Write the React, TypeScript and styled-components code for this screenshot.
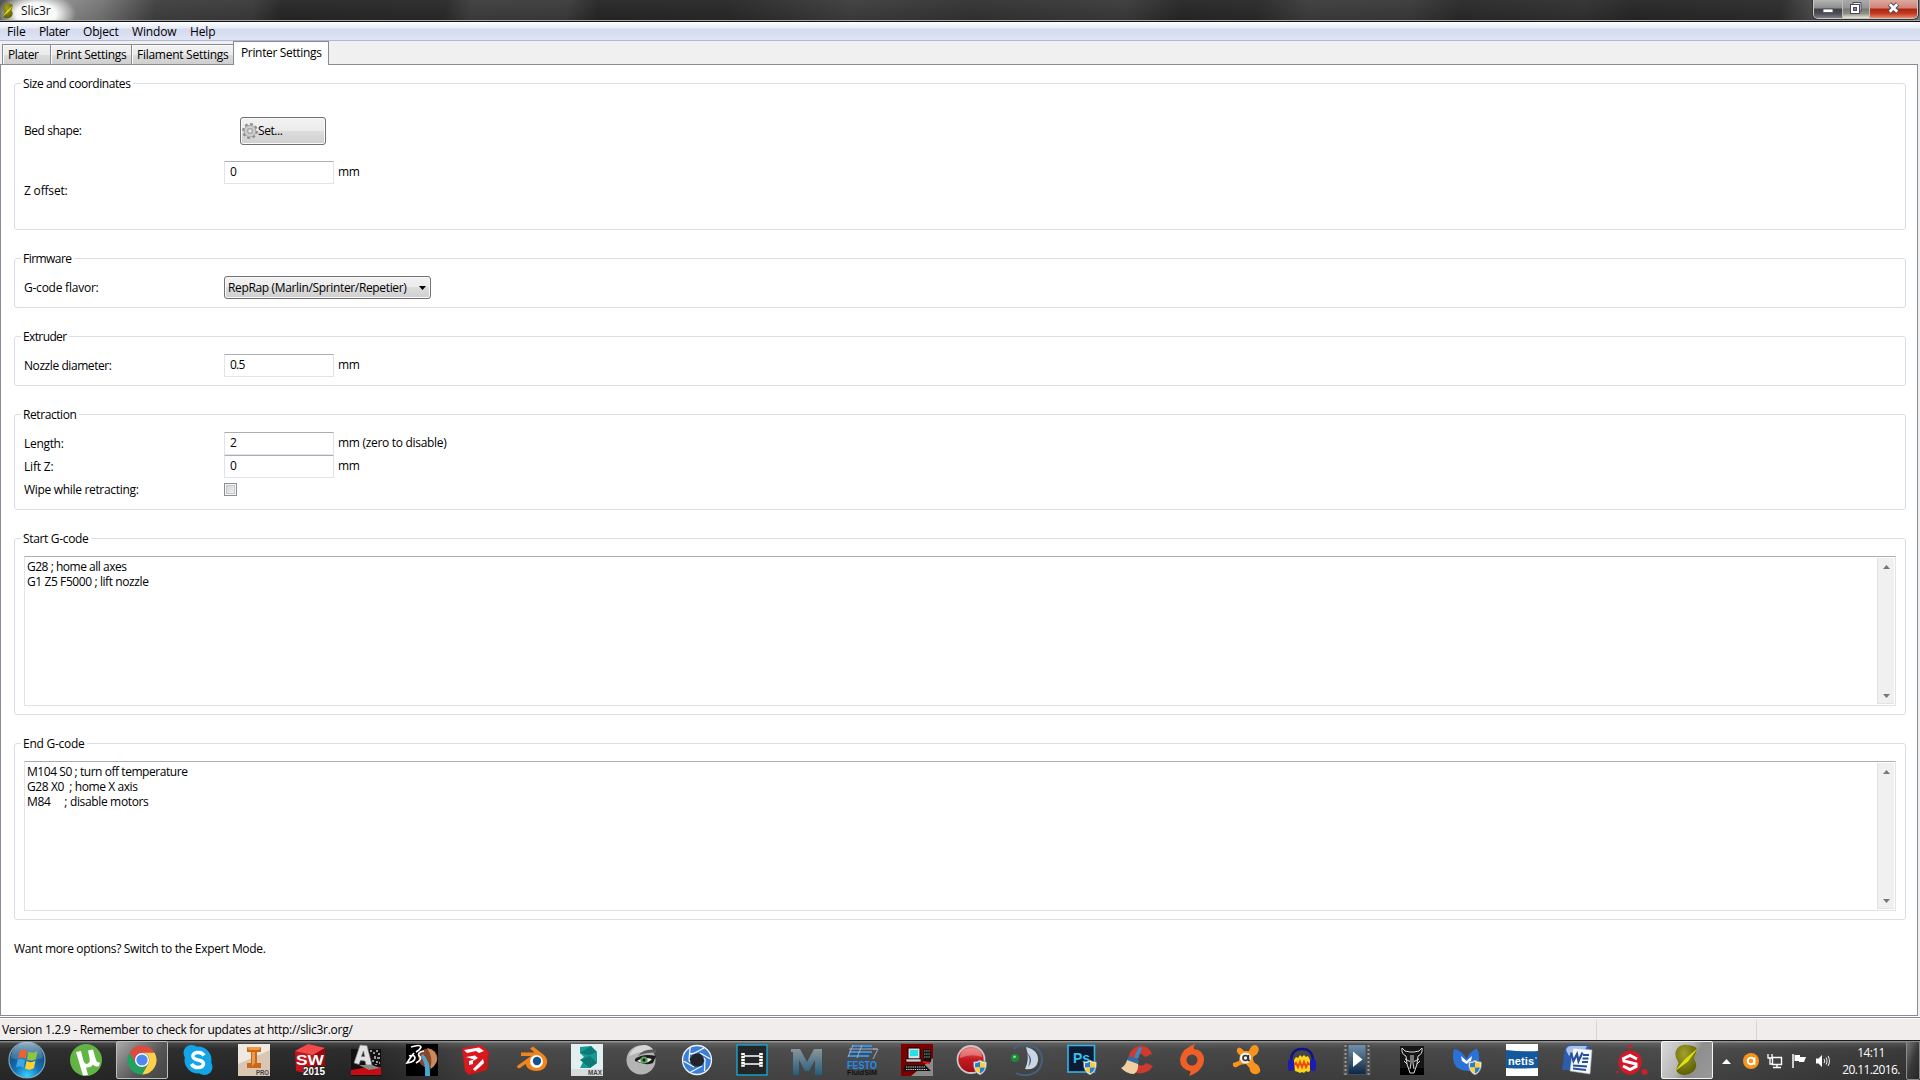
import React, { useLayoutEffect, useRef, useState } from "react";
import styled, { createGlobalStyle, css } from "styled-components";

const Global = createGlobalStyle`
  * { box-sizing: border-box; }
  html, body { margin: 0; padding: 0; }
  body {
    width: 1920px; height: 1080px; overflow: hidden; background: #f0f0f0;
    font: 12px/15px "Open Sans", "Noto Sans", sans-serif; color: #000;
  }
`;

/* ---------- text tracked to a fixed measure ---------- */
const Tracked = styled.span`
  display: inline-block;
  flex: none;
  white-space: pre;
`;

function Text({ w, children }: { w: number; children: string }) {
  const ref = useRef<HTMLSpanElement>(null);
  const [spacing, setSpacing] = useState(0);
  useLayoutEffect(() => {
    if (ref.current) {
      const natural = ref.current.getBoundingClientRect().width;
      setSpacing((w + 0.5 - natural) / children.length);
    }
  }, []);
  return <Tracked ref={ref} style={{ letterSpacing: `${spacing}px` }}>{children}</Tracked>;
}

/* ---------- frame ---------- */
const Screen = styled.div`
  width: 1920px; height: 1080px;
  display: flex; flex-direction: column;
`;

const TitleBar = styled.header`
  height: 22px; flex: none;
  display: flex; align-items: flex-start;
  padding-left: 2px;
  border-bottom: 1px solid #111;
  box-shadow: inset 0 -1px 0 #a5a5a5;
  background:
    radial-gradient(ellipse 40px 22px at 36px 14px, #fff 0%, rgba(255,255,255,.95) 50%, rgba(255,255,255,0) 100%),
    linear-gradient(to bottom, rgba(255,255,255,.04), rgba(0,0,0,.08)),
    linear-gradient(100deg, #4d4d4d 0, #8c8c8c 62px, #767676 100px, #3f3f3f 155px, #3a3a3a 250px,
      #262626 278px, #292929 440px, #3d3d3d 465px, #3b3b3b 560px, #262626 590px, #282828 720px,
      #3d3d3d 840px, #323232 960px, #3a3a3a 1110px, #262626 1165px, #292929 1240px, #3c3c3c 1290px,
      #393939 1390px, #292929 1440px, #303030 1560px, #262626 1610px, #2b2b2b 1755px, #555 1800px, #888 1920px);
`;
const TitleIcon = styled.div`
  width: 12px; height: 16px; margin-top: 3px; flex: none;
  svg { display: block; width: 12px; height: 16px; }
`;
const TitleText = styled.div`
  margin: 3px 0 0 7px; flex: 1; color: #111;
`;
const WindowButtons = styled.div`
  width: 105px; height: 19px; margin-right: 2px;
  display: flex;
  border: 1px solid #c9c9c9; border-top: 0;
  border-radius: 0 0 5px 5px; overflow: hidden;
  box-shadow: 0 0 0 1px #333;
`;
const WindowButton = styled.div<{ $w: number; $kind?: "close" | "lit" }>`
  width: ${p => p.$w}px; flex: none;
  display: flex; align-items: center; justify-content: center;
  border-right: 1px solid #bbb;
  background: linear-gradient(#b5b5b5 0, #8c8c8c 45%, #3f4046 50%, #4d4e57 75%, #7c7d86 100%);
  ${p => p.$kind === "lit" && css`background: linear-gradient(#aaa 0, #93938f 45%, #777770 50%, #8f8f84 75%, #e9e9d8 100%);`}
  ${p => p.$kind === "close" && css`border-right: 0; background: linear-gradient(#e0a99f 0, #cf8376 45%, #a92411 50%, #c33a20 75%, #e58a70 100%);`}
  svg { display: block; margin-left: -1px; }
`;

const MenuBar = styled.nav`
  height: 19px; flex: none;
  display: flex; align-items: center;
  padding-left: 7px;
  border-bottom: 1px solid #b2b9cc;
  background: linear-gradient(#fff 0, #f2f5fb 3px, #e7ebf5 6px, #d4dbed 7px, #d9dff1 12px, #e0e6f7 18px);
`;
const MenuItem = styled.div<{ $w: number }>`
  width: ${p => p.$w}px; padding-top: 1px;
`;

const TabStrip = styled.div`
  height: 23px; flex: none;
  display: flex; align-items: flex-end;
  padding-left: 2px;
  background: #f0f0f0;
`;
const Tab = styled.div<{ $w: number; $active?: boolean }>`
  width: ${p => p.$w}px; height: 20px; flex: none;
  padding: 2px 0 0 5px;
  border: 1px solid #898c95; border-bottom: 0;
  margin-right: ${p => (p.$active ? 0 : -1)}px;
  background: linear-gradient(#f2f2f2 0, #ebebeb 50%, #dcdcdc 51%, #cfcfcf 100%);
  box-shadow: inset 1px 1px 0 #fafafa;
  ${p => p.$active && css`
    height: 24px; padding: 3px 0 0 7px; background: #fff;
    margin-bottom: -1px; z-index: 1;
  `}
`;
const Page = styled.main`
  height: 952px; width: 1918px; flex: none;
  border: 1px solid #898c95;
  background: #fff;
  padding: 18px 11px 0 13px;
  display: flex; flex-direction: column; gap: 28px;
`;

/* ---------- groups ---------- */
const Group = styled.section<{ $h: number }>`
  height: ${p => p.$h}px; flex: none;
  border: 1px solid #d5dfe5; border-radius: 3px;
  padding: 0 9px;
  display: flex; flex-direction: column; align-items: stretch;
`;
const Legend = styled.h2`
  margin: -9px 0 8px -3px; padding: 1px 2px 0;
  height: 18px; flex: none; align-self: flex-start;
  background: #fff; font: inherit;
`;
const Row = styled.div<{ $tall?: boolean }>`
  height: ${p => (p.$tall ? 60 : 23)}px;
  display: flex; align-items: center;
`;
const Label = styled.label`
  width: 200px; flex: none; padding-bottom: 1px;
`;
const Field = styled.div<{ $top?: boolean }>`
  display: flex; align-items: center; gap: 4px;
  ${p => p.$top && css`align-self: flex-start;`}
`;
const Unit = styled.div`
  padding-bottom: 2px;
`;
const Input = styled.div`
  width: 110px; height: 23px;
  padding: 2px 0 0 5px;
  border: 1px solid #e2e3ea; border-top-color: #abadb3;
  border-radius: 1px; background: #fff;
`;
const grey = css`
  border: 1px solid #707070; border-radius: 3px;
  box-shadow: inset 0 0 0 1px #fafafa;
  background: linear-gradient(#f2f2f2 0, #ebebeb 49%, #dddddd 50%, #cfcfcf 100%);
`;
const PushButton = styled.div`
  ${grey}
  width: 86px; height: 28px; margin-left: 16px;
  display: flex; align-items: center; padding: 0 0 1px 1px;
  svg { display: block; margin-top: 1px; }
`;
const Select = styled.div`
  ${grey}
  width: 207px; height: 23px; padding: 0 4px 0 3px;
  display: flex; align-items: center; justify-content: space-between;
`;
const Checkbox = styled.div`
  width: 13px; height: 13px;
  border: 1px solid #8e8f8f; 
  box-shadow: inset 0 0 0 1px #f4f4f4, inset 0 0 0 2px #c4c8cf;
  background: linear-gradient(135deg, #cbcfd5, #f6f6f6);
`;
const TextArea = styled.div`
  height: 150px; display: flex;
  border: 1px solid #e2e3ea; border-top-color: #abadb3;
  padding: 1px;
`;
const Code = styled.div`
  flex: 1; display: flex; flex-direction: column; align-items: flex-start;
  padding: 1px 0 0 1px;
`;
const Scrollbar = styled.div`
  width: 17px; display: flex; flex-direction: column; justify-content: space-between; align-items: center;
  padding: 7px 0 5px; background: #f0f0f0;
  border-left: 1px solid #e3e3e3; border-bottom: 1px solid #e3e3e3;
`;
const Hint = styled.p`
  margin: -8px 0 0; padding-top: 1px;
`;

const StatusBar = styled.footer`
  height: 24px; flex: none; display: flex;
  background: #f0edec;
  border-top: 1px solid #fff;
  box-shadow: inset 0 1px 0 #85858a, inset 0 2px 0 #fff;
`;
const StatusCell = styled.div<{ $w: number }>`
  width: ${p => p.$w}px; margin-top: 3px; padding: 2px 0 0 2px;
  border-right: 1px solid #d7d7d7;
`;

/* ---------- taskbar ---------- */
const Taskbar = styled.div`
  height: 40px; flex: none; display: flex; align-items: stretch;
  border-top: 1px solid #1a1a1a;
  background:
    linear-gradient(rgba(255,255,255,.42) 0, rgba(255,255,255,.42) 1px, rgba(255,255,255,.14) 2px, rgba(255,255,255,.03) 8px, rgba(0,0,0,.08) 100%),
    linear-gradient(90deg, #292929 0, #262626 380px, #434343 480px, #484848 900px, #414141 1300px, #464646 1700px, #333 1920px);
`;
const Start = styled.div`
  width: 58px; flex: none; padding: 0 0 0 8px;
  svg { display: block; }
`;
const Apps = styled.div`
  width: 1656px; flex: none; display: flex;
`;
const AppSlot = styled.div`
  width: 55px; flex: none; display: flex; justify-content: center; align-items: flex-start;
  &:nth-child(-n + 6) { width: 56px; }
`;
const AppFace = styled.div<{ $state?: "open" | "active" }>`
  width: 52px; height: 38px; flex: none; 
  display: flex; justify-content: center; align-items: flex-start;
  padding-top: 2px;
  border-radius: 2px; border: 1px solid transparent;
  svg { display: block; overflow: visible; }
  ${p => p.$state === "open" && css`
    border-color: #bdbdbd; background: linear-gradient(135deg, #aaa 0, #777 35%, #555 60%, #444 100%);`}
  ${p => p.$state === "active" && css`
    border-color: #f5f5f5; background: linear-gradient(120deg, #dadada 0, #b5b5b5 45%, #8e8e8e 60%, #999 100%);`}
`;
const Tray = styled.div`
  width: 122px; flex: none; display: flex; align-items: center;
  padding: 1px 0 0 8px; gap: 8px;
  svg { display: block; flex: none; }
  svg:nth-child(2) { margin-left: 4px; }
`;
const Clock = styled.div`
  width: 70px; flex: none; color: #fff; 
  display: flex; flex-direction: column; align-items: center;
  padding-top: 3px; line-height: 17px;
`;
const ShowDesktop = styled.div`
  width: 14px; height: 39px; flex: none;
  border: 1px solid #8a8a8a; border-radius: 2px;
  background: linear-gradient(110deg, #777 0, #3a3a3a 50%, #262626 100%);
`;

/* ---------- drawings ---------- */
const svgFont = "Liberation Sans, Arial, sans-serif";

const Svg = ({ children, s = 32 }: { children: React.ReactNode; s?: number }) => (
  <svg width={s} height={s} viewBox="0 0 32 32">{children}</svg>
);

const Shield = () => (
  <g transform="translate(17.5 16)">
    <path d="M0 2Q4 2 6.500 0Q9 2 13 2Q13.500 12 6.500 15Q-.5 12 0 2Z" fill="#e8eef3" stroke="#7c8790" strokeWidth=".6" />
    <path d="M1.500 3.200Q4.500 3 6.500 1.500V7.500H1.600Z" fill="#2b7bd0" />
    <path d="M11.500 3.200Q8.500 3 6.500 1.500V7.500H11.400Z" fill="#fbd22c" />
    <path d="M1.600 7.500H6.500V13.600Q2.500 12 1.600 7.500Z" fill="#fbd22c" />
    <path d="M11.400 7.500H6.500V13.600Q10.500 12 11.400 7.500Z" fill="#2b7bd0" />
  </g>
);

const Slic3rLogo = ({ id }: { id: string }) => (
  <>
    <defs>
      <radialGradient id={id} cx=".4" cy=".3" r=".8">
        <stop offset="0" stopColor="#a3a02b" /><stop offset="1" stopColor="#565700" />
      </radialGradient>
    </defs>
    <path d="M16 1C9 0 4 5 4.500 11C5 15 7 17 7.500 19L5 26C7 31 13 32 18 30C24 28 27 22 24 17C22.500 15 23 13 24 11L26 5C24 2 20 1 16 1Z" fill={`url(#${id})`} />
    <path d="M27 4L14 15L3 28L17 17.500Z" fill="#dde010" />
  </>
);

const StartOrb = () => (
  <svg width="38" height="38" viewBox="0 0 38 38">
    <defs>
      <radialGradient id="orb" cx=".5" cy=".95" r=".9">
        <stop offset="0" stopColor="#38d3ff" /><stop offset=".4" stopColor="#1474b8" /><stop offset="1" stopColor="#123c66" />
      </radialGradient>
      <linearGradient id="orbTop" x2="0" y2="1"><stop offset="0" stopColor="#d9e9f2" stopOpacity=".7" /><stop offset="1" stopColor="#8db8d4" stopOpacity=".2" /></linearGradient>
    </defs>
    <circle cx="19" cy="19" r="18" fill="url(#orb)" stroke="#7fa6bd" strokeWidth="1.200" />
    <path d="M3 17A16 16 0 0 1 35 17Q19 23 3 17Z" fill="url(#orbTop)" />
    <path d="M12 10Q15.500 7.500 19 10L17.500 18Q14 15.500 10 17.500Z" fill="#f0622a" />
    <path d="M20.500 10.500Q25 13 29.500 10L28 18Q23.500 21 19 18.500Z" fill="#8cc63e" />
    <path d="M9.500 19Q13 17 17 19.500L15.500 27Q12 24.500 8 26.500Z" fill="#3ea6e6" />
    <path d="M18.500 20Q23 22.500 27.500 19.500L26 27Q21.500 30 17 27.500Z" fill="#fdd02f" />
  </svg>
);

const UTorrent = () => (
  <Svg><circle cx="16" cy="16" r="16" fill="#62b545" />
    <path d="M6 8L11 7L13.500 17Q15 21 18 19.500Q20.500 18 19.500 14L18 6.500L23 5.500L26 16Q27 19 30 18.500L29 22Q25 23.500 23 20.500Q21 24 16 23.500L18 31L13 31.500Z" fill="#fff" /></Svg>
);
const Chrome = () => (
  <Svg>
    <g transform="translate(1.500 1.500) scale(.906)">
      <path d="M2.140 8A16 16 0 0 1 29.860 8H16A8 8 0 0 0 9.070 20Z" fill="#dd4b3e" />
      <path d="M29.860 8A16 16 0 0 1 16 32L22.930 20A8 8 0 0 0 16 8Z" fill="#fdd04a" />
      <path d="M16 32A16 16 0 0 1 2.140 8L9.070 20A8 8 0 0 0 22.930 20Z" fill="#22a25f" />
      <circle cx="16" cy="16" r="7.800" fill="#fff" /><circle cx="16" cy="16" r="6.200" fill="#4d8af0" />
    </g>
  </Svg>
);
const Skype = () => (
  <Svg>
    <circle cx="16" cy="16" r="13.500" fill="#12a5e8" /><circle cx="9.500" cy="9" r="8" fill="#12a5e8" /><circle cx="22.500" cy="23" r="8" fill="#12a5e8" />
    <path d="M22 11.500Q20 8 15.500 8.500Q10.500 9 11 12.500Q11.500 15 16 16Q21.500 17 21.500 20Q21 23.500 16 23.500Q11.500 23.500 9.500 20" fill="none" stroke="#fff" strokeWidth="3.600" />
  </Svg>
);
const Inventor = () => (
  <Svg>
    <rect width="32" height="32" fill="#efe9e2" /><path d="M0 32V20L32 6V32Z" fill="#d9c7b4" />
    <path d="M9 3H23V8H19V19H23V24H9V19H13V8H9Z" fill="#c9681b" /><path d="M9 3H23L21 6H11ZM14 8H17V19L14 22Z" fill="#ef9a45" />
    <text x="18" y="31" fontFamily={svgFont} fontSize="6.500" fontWeight="bold" fill="#444" textLength="13" lengthAdjust="spacingAndGlyphs">PRO</text>
  </Svg>
);
const SolidWorks = () => (
  <Svg>
    <path d="M1 7L14 0L31 4V22L19 31L2 27Z" fill="#c3131b" /><path d="M1 7L14 0L31 4L19 11Z" fill="#ef4b4b" /><path d="M19 11L31 4V22L19 31Z" fill="#96090f" />
    <text x="2" y="21" fontFamily={svgFont} fontSize="14" fontWeight="bold" fill="#fff" textLength="28" lengthAdjust="spacingAndGlyphs">SW</text>
    <text x="9" y="31" fontFamily={svgFont} fontSize="10" fontWeight="bold" fill="#fff" stroke="#222" strokeWidth="2" paintOrder="stroke" textLength="22">2015</text>
  </Svg>
);
const AutoCad = () => (
  <Svg>
    <rect x="1" y="5" width="30" height="27" fill="#111" /><path d="M18 23H31V31H1V26Z" fill="#c70d12" />
    <path d="M20 6h2v2h-2zM23 8h2v2h-2zM26 6h2v2h-2zM28 9h2v2h-2zM24 12h2v3h-2zM27 13h3v2h-3zM22 16h2v2h-2zM26 17h2v2h-2zM29 18h1v2h-1zM25 20h2v1h-2z" fill="#999" />
    <path fillRule="evenodd" d="M4 19L10 1L17 1.500L22 21L16 21L15 17L10.500 16.500L9 20.500ZM11.500 12.500H14.500L13.500 7Z" fill="#e2e2e2" stroke="#777" strokeWidth=".7" />
    <path d="M9 21L16 21L22 21L30 24L19 26Z" fill="#8a8a8a" />
  </Svg>
);
const Dassault = () => (
  <Svg>
    <rect width="32" height="32" fill="#000" /><circle cx="22" cy="14" r="9.500" fill="#8a4628" /><path d="M21 4Q31 6 31 16Q29 23 24 25Q28 14 21 4Z" fill="#c98a5c" />
    <path d="M17 10Q25 18 24 32H19Q20 20 15 12Z" fill="#4aa6d0" />
    <path d="M5 3Q14 0 15 3Q14 6 10 8M8 9Q4 14 1 19Q9 18 9 13.500Q8 10 3 12M18 7Q11 8 13 12Q17 15 10 19" fill="none" stroke="#fff" strokeWidth="1.700" />
  </Svg>
);
const SketchUp = () => (
  <Svg>
    <path d="M1 4L20 1L28 8L26 26L8 31L4 27Z" fill="#d8191f" />
    <path d="M3 6L18 3.500L23 7L18 9L15 7L6 9ZM5 13L14 11.500L17 14L12 17V20L8 21V17L13 15.500ZM12 25L22 15L23 19L14 27.500Z" fill="#fff" />
    <path d="M28 8L26 26L8 31L11 27L22 22Z" fill="#a80d12" opacity=".3" />
  </Svg>
);
const Blender = () => (
  <Svg>
    <path d="M1 22L15 12H5V8.500H18.500L14 4.500L17 2.500L28 11Q32 15 31 19Q29 27 20.500 27Q11.500 27 9.500 20L4 24Q1 25 1 22Z" fill="#f0851c" />
    <circle cx="20.500" cy="17.500" r="6.500" fill="#fff" /><circle cx="21" cy="17" r="4.200" fill="#15518f" />
  </Svg>
);
const Max = () => (
  <Svg>
    <rect width="32" height="32" fill="#e3efee" /><path d="M9 3L20 2L26 8V19L19 24H9L12 18L9 16L13 13L9 9Z" fill="#159a94" /><path d="M9 9L20 2L26 8L18 11ZM9 16L19 12L26 19L19 24Z" fill="#0c6c6b" opacity=".7" />
    <rect y="25" width="32" height="7" fill="#d7dcdc" /><text x="17" y="31" fontFamily={svgFont} fontSize="6.500" fontWeight="bold" fill="#444" textLength="14" lengthAdjust="spacingAndGlyphs">MAX</text>
  </Svg>
);
const Eye = () => (
  <Svg>
    <circle cx="15" cy="16" r="14.500" fill="#b4b4b4" /><path d="M20 1Q8 0 3 12L14 8L29 9Q27 3 20 1Z" fill="#d6d6d6" /><path d="M12 12Q18 4 30 6V9Q20 8 12 12Z" fill="#5a5a5a" />
    <path d="M9 15Q17 9 30 12L27 19Q21 22 9 17Z" fill="#1b1b1b" /><path d="M11 17Q17 12 26 15Q20 22 11 17Z" fill="#e9efe9" />
    <circle cx="18" cy="16" r="3.600" fill="#58a05a" /><circle cx="18" cy="16" r="1.500" fill="#111" />
  </Svg>
);
const Aperture = () => (
  <Svg>
    <circle cx="16" cy="16" r="14.500" fill="#3b7fd8" stroke="#f2f6fa" strokeWidth="1.300" />
    <path d="M12.500 9.500H19.500L24 16L20 22.500H12L8 16Z" fill="#222427" />
    <path d="M8 10L12.500 9.500L23 4M19 9L29.500 15M23 14L24 16L23.500 27M21 22L9 28.500M13 23L2.500 17M9 18L8 16L9 4" stroke="#f2f6fa" strokeWidth="1.300" fill="none" />
  </Svg>
);
const Film = () => (
  <Svg>
    <rect x="1" y="1" width="30" height="30" fill="#232527" stroke="#17a5cf" strokeWidth="1.400" />
    <path d="M7 9V23M25 9V23" stroke="#fff" strokeWidth="3.600" strokeDasharray="2.200 .7" /><path d="M8 12H24M8 20H24" stroke="#fff" strokeWidth="1.300" />
  </Svg>
);
const Maya = () => (
  <Svg>
    <defs><linearGradient id="maya" x2="0" y2="1"><stop stopColor="#8b9499" /><stop offset="1" stopColor="#225d80" /></linearGradient></defs>
    <path d="M0 5H9L16 18L23 5H31V31H24V16L18 27H14L8 16V31H2V8H0Z" fill="url(#maya)" />
  </Svg>
);
const Festo = () => (
  <Svg>
    <path d="M6 2H26M3 8H26M2 12H23" stroke="#2f93ee" strokeWidth="2.200" /><path d="M7 1L2 13M16 1L11 14M27 5L32 5L27 15M3 5H31" stroke="#aab" strokeWidth="1" fill="none" />
    <text x="1" y="24.500" fontFamily={svgFont} fontSize="10" fontWeight="bold" fill="#1f8df2" textLength="30" lengthAdjust="spacingAndGlyphs">FESTO</text>
    <text x="1" y="31" fontFamily={svgFont} fontSize="6.500" fontWeight="bold" fill="#101010" textLength="30" lengthAdjust="spacingAndGlyphs">FluidSIM</text>
  </Svg>
);
const Terminal = () => (
  <Svg>
    <rect width="32" height="32" fill="#7c0000" /><path d="M32 14V32H10Z" fill="#8b8b8b" />
    <path d="M7 4H19V15H7Z" fill="#ddd" stroke="#000" /><rect x="9" y="6" width="8" height="6" fill="#26e0e6" /><rect x="5" y="15" width="15" height="3" fill="#ccc" stroke="#000" strokeWidth=".6" />
    <path d="M22 5H30V18H22Z" fill="#111" /><path d="M23 7H29M23 10H29M23 13H29" stroke="#aaa" strokeDasharray="1.400 .8" />
    <path d="M4 21H24L30 27H2Z" fill="#111" /><path d="M5 23H24M5 25.500H26" stroke="#ccc" strokeDasharray="1.400 .8" /><path d="M22 18L29 19" stroke="#e11" strokeWidth="2" />
  </Svg>
);
const RedBall = () => (
  <Svg>
    <defs><linearGradient id="ball" x2="0" y2="1"><stop stopColor="#ee7777" /><stop offset=".5" stopColor="#c31a20" /><stop offset="1" stopColor="#a00d12" /></linearGradient></defs>
    <circle cx="15" cy="15.500" r="13.500" fill="url(#ball)" stroke="#c8c8c8" strokeWidth="1.800" /><path d="M4 14Q4 4 15 4Q26 4 26 13Q15 9 4 14Z" fill="#f5a7a7" opacity=".5" /><Shield />
  </Svg>
);
const TeamSpeak = () => (
  <Svg>
    <path d="M3 5Q8 -1 18 1Q31 4 31 16Q30 29 17 31Q10 32 5 29" fill="none" stroke="#46617f" strokeWidth="2" />
    <path d="M15 3Q28 6 27 17Q25 27 14 25Q19 15 15 3Z" fill="#c8d6e6" /><path d="M15 8Q21 14 17 23Q24 15 15 8Z" fill="#48617d" />
    <circle cx="4" cy="14" r="4" fill="#1b8c35" /><circle cx="3.500" cy="12.800" r="1.400" fill="#8be39a" />
  </Svg>
);
const Photoshop = () => (
  <Svg>
    <rect x="2" y="1.500" width="26.500" height="26.500" fill="#0c1a33" stroke="#2fb6ea" strokeWidth="1.600" />
    <text x="7" y="19" fontFamily={svgFont} fontSize="14" fontWeight="bold" fill="#35c2f2" textLength="17">Ps</text><Shield />
  </Svg>
);
const CCleaner = () => (
  <Svg>
    <path d="M31 10Q28 1 18 2Q8 4 7.500 16Q8 28 19 29.500Q28 29 32 22L25 19Q22 23 18 21Q14 18 16 12Q19 7 24 13Z" fill="#cf3a2c" />
    <path d="M18 3L21 4L17 15L13 13Z" fill="#3b86c6" /><path d="M8 12L18 16L17 20L6 16Z" fill="#2d6ea9" /><path d="M6 16L17 20Q18 27 13 30Q6 30 0 24Q5 21 6 16Z" fill="#f0cfa0" />
  </Svg>
);
const Origin = () => (
  <Svg>
    <path fillRule="evenodd" d="M19 0Q17 3 18 5Q28 6 28 16Q27 27 13 32Q15 28 14 27Q4 25 4 15Q6 4 19 0ZM16 10.500A5.500 5.500 0 1 0 16 21.500A5.500 5.500 0 1 0 16 10.500Z" fill="#ef5f26" />
  </Svg>
);
const Avast = () => (
  <Svg>
    <path d="M6 5Q8 2 11 5L13 7L18 7Q20 0 25 1Q30 4 26 10L22 13Q21 18 27 21Q32 28 26 30Q19 31 18.500 24L15 20Q9 20 6 23Q1 24 2 19Q5 18 8 17L9 11Q5 9 6 5Z" fill="#f7941d" />
    <circle cx="14.500" cy="14" r="5.600" fill="#f1f1f1" /><circle cx="14.500" cy="14" r="2.500" fill="none" stroke="#333" strokeWidth="1.600" /><path d="M17.500 11V16.500H19" stroke="#333" strokeWidth="1.400" fill="none" />
  </Svg>
);
const Audacity = () => (
  <Svg>
    <path d="M5 20Q4 5 16 5Q28 5 27 20" fill="none" stroke="#10108c" strokeWidth="2.400" />
    <path d="M8 16L10 13L12 14L14 11L16 13L18 11L20 13L22 12L24 16V27L22 28L20 27L18 29L16 28L14 29L12 28L9 27Z" fill="#ffd21c" /><path d="M8 21L10 19L12 23L14 18L16 23L18 18L20 23L22 19L24 21" fill="none" stroke="#ec4a12" strokeWidth="2" />
    <rect x="2" y="15" width="6" height="12" rx="3" fill="#1b1bb5" /><rect x="24" y="15" width="6" height="12" rx="3" fill="#1b1bb5" />
  </Svg>
);
const Player = () => (
  <Svg>
    <rect x="2" y="0" width="28" height="31" fill="#4d4d4d" /><path d="M4.500 1V31M27.500 1V31" stroke="#999" strokeWidth="2" strokeDasharray="2 2" />
    <defs><linearGradient id="play" x2="0" y2="1"><stop stopColor="#7090ad" /><stop offset="1" stopColor="#0d2846" /></linearGradient></defs>
    <rect x="7.500" y="1" width="17" height="29" fill="url(#play)" /><path d="M12 7.500L21.500 15.500L12 23Z" fill="#fff" />
  </Svg>
);
const Bull = () => (
  <Svg>
    <rect x="4" y="2" width="24" height="29" rx="1" fill="#151515" /><rect x="4" y="24" width="24" height="7" fill="#000" />
    <path d="M6 4Q8 8 14 8H18Q24 8 26 4Q27 10 22 12L21 20L18 29H14L11 20L10 12Q5 10 6 4ZM9 15L14 17.500M23 15L18 17.500M15 11V19L14 25M17 11V19L18 25M11 20L8 17M21 20L24 17" fill="none" stroke="#d8d8d8" strokeWidth="1" />
  </Svg>
);
const Malwarebytes = () => (
  <Svg>
    <path d="M3 5Q11 6 15.500 15Q20 6 26 4.500Q30 13 27 22Q24 28 18 27Q6 27 3 19Q1 11 3 5Z" fill="#2a72d6" /><path d="M10 12L15.500 17L21 12L20 17L15.500 20L11 17Z" fill="#fff" /><Shield />
  </Svg>
);
const Netis = () => (
  <Svg>
    <rect width="32" height="32" fill="#fff" /><path d="M0 6Q20 8 32 7V24Q16 25 0 24Z" fill="#14599e" />
    <text x="2" y="21" fontFamily={svgFont} fontSize="11" fontWeight="bold" fill="#fff" textLength="26">netis</text><circle cx="30" cy="14" r=".8" fill="#fff" />
  </Svg>
);
const Word = () => (
  <Svg>
    <path d="M4 5Q5 1 9 1H26Q29 1 28 5L24 26H1Z" fill="#2d5cae" /><path d="M5 6Q6 2 10 2H26L24 6Q12 5 8 12Z" fill="#a9c4ec" />
    <path d="M12 4L31 6L29 30L9 27Z" fill="#f5f8fc" stroke="#9eb4d2" strokeWidth=".6" /><path d="M22 11H28M21.500 14.500H27.500M21 18H27M12 21.500L26 22.500M12 24.500L25 26" stroke="#254f9b" strokeWidth="1.800" />
    <path d="M10 8.500L12.500 17L16 10L17.500 17L21.500 8.500" fill="none" stroke="#254f9b" strokeWidth="2.200" />
  </Svg>
);
const RedS = () => (
  <Svg>
    <path d="M14 6L20 8L24.500 12L26 18L24 25L19 29.500L14 31L8 29L4 25L2 18L4 12L8 8Z" fill="#d3182a" /><circle cx="14" cy="2.500" r="2" fill="#c9202d" /><circle cx="28.500" cy="28" r="3" fill="#c9202d" /><circle cx="1.500" cy="28" r="1.300" fill="#c9202d" />
    <path d="M21 15L14 11.500L7.500 14.500L8 17L20 20V22.500L14 25.500L7 22" fill="none" stroke="#fff" strokeWidth="3" />
  </Svg>
);

const Gear = () => (
  <svg width="16" height="16" viewBox="0 0 16 16">
    <circle cx="8" cy="8" r="6.800" fill="none" stroke="#8a8a8a" strokeWidth="2.200" strokeDasharray="2.670 2.670" />
    <circle cx="8" cy="8" r="4.300" fill="none" stroke="#999" strokeWidth="3.800" />
    <circle cx="8" cy="8" r="4.200" fill="none" stroke="#cdcdcd" strokeWidth="2.600" />
    <circle cx="8" cy="8" r="2.200" fill="#ececec" stroke="#999" strokeWidth=".9" />
  </svg>
);
const ScrollArrow = ({ down }: { down?: boolean }) => (
  <svg width="7" height="4" viewBox="0 0 7 4"><path d={down ? "M0 0H7L3.500 4Z" : "M0 4H7L3.500 0Z"} fill="#777" /></svg>
);

const apps: { icon: React.ReactNode; state?: "open" | "active" }[] = [
  { icon: <UTorrent /> }, { icon: <Chrome />, state: "open" }, { icon: <Skype /> }, { icon: <Inventor /> }, { icon: <SolidWorks /> },
  { icon: <AutoCad /> }, { icon: <Dassault /> }, { icon: <SketchUp /> }, { icon: <Blender /> }, { icon: <Max /> }, { icon: <Eye /> },
  { icon: <Aperture /> }, { icon: <Film /> }, { icon: <Maya /> }, { icon: <Festo /> }, { icon: <Terminal /> }, { icon: <RedBall /> },
  { icon: <TeamSpeak /> }, { icon: <Photoshop /> }, { icon: <CCleaner /> }, { icon: <Origin /> }, { icon: <Avast /> }, { icon: <Audacity /> },
  { icon: <Player /> }, { icon: <Bull /> }, { icon: <Malwarebytes /> }, { icon: <Netis /> }, { icon: <Word /> }, { icon: <RedS /> },
  { icon: <Svg><Slic3rLogo id="slTask" /></Svg>, state: "active" },
];

const CodeBox = ({ lines }: { lines: [string, number][] }) => (
  <TextArea>
    <Code>{lines.map(([t, w]) => <Text key={t} w={w}>{t}</Text>)}</Code>
    <Scrollbar><ScrollArrow /><ScrollArrow down /></Scrollbar>
  </TextArea>
);

export default function App() {
  return (
    <Screen>
      <Global />
      <TitleBar>
        <TitleIcon><svg viewBox="3 0 25 32" preserveAspectRatio="none"><Slic3rLogo id="slTitle" /></svg></TitleIcon>
        <TitleText><Text w={29}>Slic3r</Text></TitleText>
        <WindowButtons>
          <WindowButton $w={29}><svg width="12" height="18"><rect x="1" y="9" width="10" height="3.500" fill="#fff" stroke="#4a4a5c" strokeWidth=".8" /></svg></WindowButton>
          <WindowButton $w={27} $kind="lit"><svg width="13" height="18"><path d="M4 2.500H12V11H4Z" fill="#eee" stroke="#4a4a5c" /><rect x="1.500" y="4.500" width="9" height="9" fill="#fff" stroke="#4a4a5c" /><rect x="4.500" y="7.500" width="3" height="3" fill="#888" stroke="#4a4a5c" /></svg></WindowButton>
          <WindowButton $w={48} $kind="close"><svg width="13" height="18"><path d="M2.500 4L10.500 12M10.500 4L2.500 12" stroke="#4a4a5c" strokeWidth="4.600" /><path d="M2.800 4.300L10.200 11.700M10.200 4.300L2.800 11.700" stroke="#fff" strokeWidth="2.800" /></svg></WindowButton>
        </WindowButtons>
      </TitleBar>
      <MenuBar>
        <MenuItem $w={32}><Text w={18}>File</Text></MenuItem>
        <MenuItem $w={44}><Text w={30}>Plater</Text></MenuItem>
        <MenuItem $w={49}><Text w={35}>Object</Text></MenuItem>
        <MenuItem $w={58}><Text w={44}>Window</Text></MenuItem>
        <MenuItem $w={40}><Text w={25}>Help</Text></MenuItem>
      </MenuBar>
      <TabStrip>
        <Tab $w={49}><Text w={30}>Plater</Text></Tab>
        <Tab $w={82}><Text w={70}>Print Settings</Text></Tab>
        <Tab $w={103}><Text w={91}>Filament Settings</Text></Tab>
        <Tab $w={96} $active><Text w={80}>Printer Settings</Text></Tab>
      </TabStrip>
      <Page>
        <Group $h={147}>
          <Legend><Text w={107}>Size and coordinates</Text></Legend>
          <Row $tall><Label><Text w={57}>Bed shape:</Text></Label><PushButton><Gear /><Text w={24}>Set...</Text></PushButton></Row>
          <Row $tall><Label><Text w={43}>Z offset:</Text></Label><Field $top><Input><Text w={6}>0</Text></Input><Unit><Text w={21}>mm</Text></Unit></Field></Row>
        </Group>
        <Group $h={50}>
          <Legend><Text w={48}>Firmware</Text></Legend>
          <Row><Label><Text w={74}>G-code flavor:</Text></Label>
            <Select><Text w={178}>RepRap (Marlin/Sprinter/Repetier)</Text><svg width="7" height="4"><path d="M0 0H7L3.500 4Z" /></svg></Select></Row>
        </Group>
        <Group $h={50}>
          <Legend><Text w={43}>Extruder</Text></Legend>
          <Row><Label><Text w={87}>Nozzle diameter:</Text></Label><Field><Input><Text w={14}>0.5</Text></Input><Unit><Text w={21}>mm</Text></Unit></Field></Row>
        </Group>
        <Group $h={96}>
          <Legend><Text w={53}>Retraction</Text></Legend>
          <Row><Label><Text w={39}>Length:</Text></Label><Field><Input><Text w={6}>2</Text></Input><Unit><Text w={108}>mm (zero to disable)</Text></Unit></Field></Row>
          <Row><Label><Text w={29}>Lift Z:</Text></Label><Field><Input><Text w={6}>0</Text></Input><Unit><Text w={21}>mm</Text></Unit></Field></Row>
          <Row><Label><Text w={114}>Wipe while retracting:</Text></Label><Checkbox /></Row>
        </Group>
        <Group $h={177}>
          <Legend><Text w={65}>Start G-code</Text></Legend>
          <CodeBox lines={[["G28 ; home all axes", 99], ["G1 Z5 F5000 ; lift nozzle", 121]]} />
        </Group>
        <Group $h={177}>
          <Legend><Text w={61}>End G-code</Text></Legend>
          <CodeBox lines={[["M104 S0 ; turn off temperature", 160], ["G28 X0  ; home X axis", 110], ["M84     ; disable motors", 121]]} />
        </Group>
        <Hint><Text w={251}>Want more options? Switch to the Expert Mode.</Text></Hint>
      </Page>
      <StatusBar>
        <StatusCell $w={1597}><Text w={350}>Version 1.2.9 - Remember to check for updates at http://slic3r.org/</Text></StatusCell>
        <StatusCell $w={160} />
      </StatusBar>
      <Taskbar>
        <Start><StartOrb /></Start>
        <Apps>{apps.map((a, i) => <AppSlot key={i}><AppFace $state={a.state}>{a.icon}</AppFace></AppSlot>)}</Apps>
        <Tray>
          <svg width="9" height="5"><path d="M0 5L4.500 0L9 5Z" fill="#fff" /></svg>
          <svg width="16" height="16" viewBox="0 0 16 16"><circle cx="8" cy="8" r="8" fill="#f7941d" /><circle cx="8" cy="8" r="3.300" fill="none" stroke="#fff" strokeWidth="1.900" /><path d="M11.500 4.500V11.800" stroke="#fff" strokeWidth="1.800" /></svg>
          <svg width="16" height="16" viewBox="0 0 16 16"><path d="M5.500 4.500H14.500V11.500H5.500ZM10 12V14M6 14.500H14" fill="none" stroke="#fff" strokeWidth="1.400" /><path d="M1 1V5H5V1M3 5V11H6" fill="none" stroke="#fff" strokeWidth="1.300" /></svg>
          <svg width="16" height="16" viewBox="0 0 16 16"><path d="M2 1V15" stroke="#fff" strokeWidth="1.500" /><path d="M3.500 2H9V4H15L13 9H8V8H3.500Z" fill="#fff" /></svg>
          <svg width="16" height="16" viewBox="0 0 16 16"><path d="M1 5.500H3.500L7 2V14L3.500 10.500H1Z" fill="#fff" /><path d="M9 6Q10.300 8 9 10M11 4.500Q13 8 11 11.500M13 3Q16 8 13 13" fill="none" stroke="#ddd" strokeWidth="1.100" /></svg>
        </Tray>
        <Clock><Text w={27}>14:11</Text><Text w={57}>20.11.2016.</Text></Clock>
        <ShowDesktop />
      </Taskbar>
    </Screen>
  );
}
